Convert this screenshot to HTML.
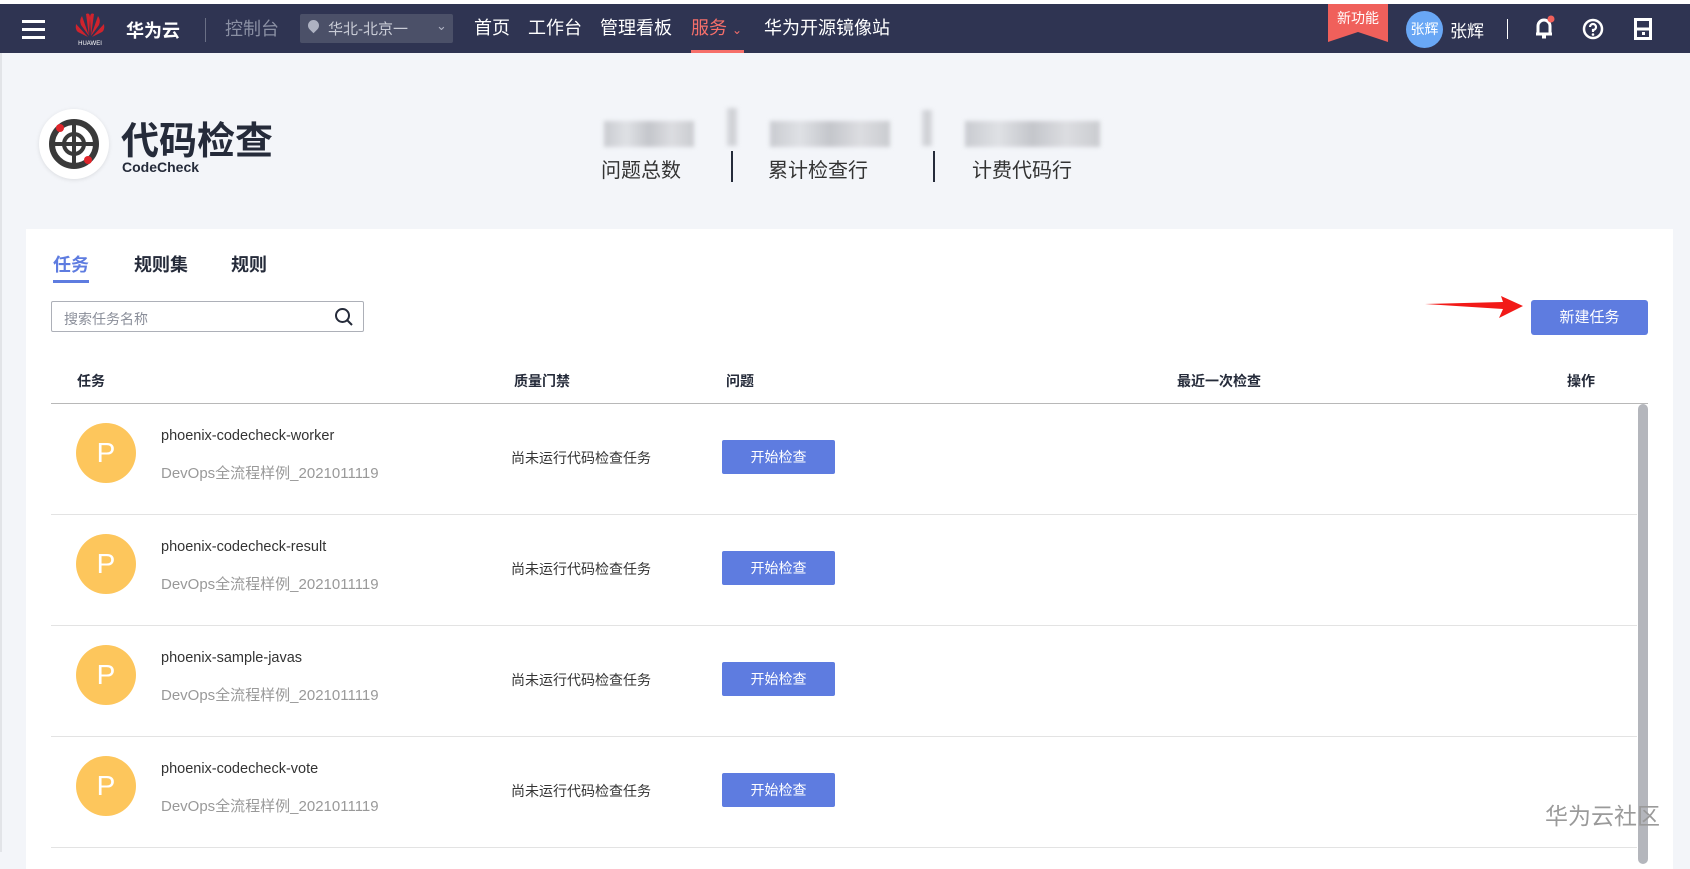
<!DOCTYPE html>
<html><head><meta charset="utf-8"><style>
*{margin:0;padding:0;box-sizing:border-box}
body{width:1690px;height:852px;overflow:hidden;background:#f3f5f9;font-family:"Liberation Sans","Noto Sans CJK SC",sans-serif;position:relative;color:#252b3a}
.a{position:absolute;white-space:nowrap}
.nav{left:0;top:4px;width:1690px;height:49px;background:#2f3452}
.nt{color:#fff;font-size:18px;top:14px}
.card{left:26px;top:229px;width:1647px;height:640px;background:#fff}
.th{font-size:14px;font-weight:bold;top:371px}
.row{position:absolute;left:51px;width:1586px;height:111px;border-bottom:1px solid #e3e3e3}
.av{position:absolute;left:25px;top:19px;width:60px;height:60px;border-radius:50%;background:#fdc65c;color:#fff;font-size:28px;text-align:center;line-height:60px}
.n1{position:absolute;left:110px;top:24px;font-size:14.5px;color:#333}
.n2{position:absolute;left:110px;top:58px;font-size:15px;color:#999}
.st{position:absolute;left:460px;top:44px;font-size:14px;color:#333}
.btn{position:absolute;left:671px;top:36px;width:113px;height:34px;background:#5e7ce0;border-radius:2px;color:#fff;font-size:14px;text-align:center;line-height:34px}
.blur{background:linear-gradient(90deg,#c9cbd0,#dfe1e5,#c4c6cb,#dcdde1,#caccd0);filter:blur(2px)}
</style></head><body>
<div class="a" style="left:0;top:0;width:1690px;height:4px;background:#fff"></div>
<div class="a nav"></div>
<div class="a" style="left:22px;top:20px;width:23px;height:3px;background:#fff;box-shadow:0 8px 0 #fff,0 16px 0 #fff"></div>
<svg class="a" style="left:72px;top:10px" width="36" height="36" viewBox="0 0 36 36"><g fill="#d0232d"><path d="M17 26 L10 6 Q7 10 9 15Z"/><path d="M19 26 L26 6 Q29 10 27 15Z"/><path d="M16 27 L4 14 Q3 20 6 22Z"/><path d="M20 27 L32 14 Q33 20 30 22Z"/><path d="M17 26 L14 4 Q18 2 18 8Z"/><path d="M19 26 L22 4 Q18 2 18 8Z"/></g><text x="18" y="35" font-size="6" fill="#fff" text-anchor="middle" font-family="Liberation Sans">HUAWEI</text></svg>
<div class="a" style="left:126px;top:17px;font-size:18px;font-weight:bold;color:#fff">华为云</div>
<div class="a" style="left:205px;top:18px;width:1px;height:24px;background:#6a6f85"></div>
<div class="a" style="left:225px;top:15px;font-size:18px;color:#8a8fa3">控制台</div>
<div class="a" style="left:300px;top:14px;width:153px;height:29px;background:#4b5068;border-radius:2px"></div>
<div class="a" style="left:308px;top:20px;width:11px;height:11px;border-radius:50% 50% 50% 0;transform:rotate(-45deg);background:#aeb2c2"></div>
<div class="a" style="left:328px;top:18px;font-size:15px;color:#c9ccd6">华北-北京一</div>
<div class="a" style="left:436px;top:18px;font-size:13px;color:#aeb2c2">⌄</div>
<div class="a nt" style="left:474px">首页</div>
<div class="a nt" style="left:528px">工作台</div>
<div class="a nt" style="left:600px">管理看板</div>
<div class="a nt" style="left:691px;color:#f66f6a">服务 <span style="font-size:12px">⌄</span></div>
<div class="a" style="left:691px;top:50px;width:53px;height:3px;background:#f66f6a"></div>
<div class="a nt" style="left:764px">华为开源镜像站</div>
<svg class="a" style="left:1328px;top:4px" width="60" height="38"><path d="M0 0H60V38L30 28L0 38Z" fill="#f0605b"/><text x="30" y="19" font-size="14" fill="#fff" text-anchor="middle" font-family="Noto Sans CJK SC">新功能</text></svg>
<div class="a" style="left:1406px;top:11px;width:37px;height:37px;border-radius:50%;background:#69a7f5;color:#fff;font-size:14px;line-height:37px;text-align:center">张辉</div>
<div class="a" style="left:1450px;top:17px;font-size:17px;color:#fff">张辉</div>
<div class="a" style="left:1507px;top:19px;width:1px;height:20px;background:#fff"></div>
<svg class="a" style="left:1533px;top:15px" width="24" height="26" viewBox="0 0 24 26"><path d="M5 19V11a6 6 0 0 1 12 0v8M3 19H19M9 22H13" stroke="#fff" stroke-width="3" fill="none"/><circle cx="18" cy="4" r="3.5" fill="#f0605b"/></svg>
<svg class="a" style="left:1582px;top:18px" width="22" height="22"><circle cx="11" cy="11" r="9" stroke="#fff" stroke-width="2.5" fill="none"/><path d="M8 9a3 3 0 1 1 3 3v2" stroke="#fff" stroke-width="2.2" fill="none"/><circle cx="11" cy="16.5" r="1.3" fill="#fff"/></svg>
<svg class="a" style="left:1634px;top:18px" width="18" height="22"><rect x="1.5" y="1.5" width="15" height="19" stroke="#fff" stroke-width="3" fill="none"/><path d="M2 11H16" stroke="#fff" stroke-width="3"/><rect x="8" y="14" width="3" height="3" fill="#fff"/></svg>

<div class="a" style="left:0;top:53px;width:2px;height:799px;background:#e2e4e8"></div>
<div class="a" style="left:39px;top:109px;width:70px;height:70px;border-radius:50%;background:#fff;box-shadow:0 1px 4px rgba(0,0,0,.1)"></div>
<svg class="a" style="left:46px;top:116px" width="56" height="56" viewBox="0 0 56 56"><circle cx="28" cy="28" r="22" stroke="#3a3a3a" stroke-width="6" fill="none"/><circle cx="28" cy="28" r="10" stroke="#3a3a3a" stroke-width="4" fill="none"/><path d="M28 8V48M8 28H48" stroke="#3a3a3a" stroke-width="4"/><circle cx="14" cy="12" r="4" fill="#e0252b"/><circle cx="42" cy="44" r="4" fill="#e0252b"/></svg>
<div class="a" style="left:121px;top:110px;font-size:38px;font-weight:bold;color:#252b3a">代码检查</div>
<div class="a" style="left:122px;top:159px;font-size:14px;font-weight:bold">CodeCheck</div>
<div class="a blur" style="left:604px;top:121px;width:90px;height:26px"></div>
<div class="a blur" style="left:727px;top:108px;width:10px;height:38px"></div>
<div class="a blur" style="left:770px;top:121px;width:120px;height:26px"></div>
<div class="a blur" style="left:922px;top:110px;width:10px;height:36px"></div>
<div class="a blur" style="left:965px;top:121px;width:135px;height:26px"></div>
<div class="a" style="left:601px;top:154px;font-size:20px;color:#333">问题总数</div>
<div class="a" style="left:731px;top:151px;width:2px;height:31px;background:#252b3a"></div>
<div class="a" style="left:768px;top:154px;font-size:20px;color:#333">累计检查行</div>
<div class="a" style="left:933px;top:151px;width:2px;height:31px;background:#252b3a"></div>
<div class="a" style="left:972px;top:154px;font-size:20px;color:#333">计费代码行</div>

<div class="a card"></div>
<div class="a" style="left:53px;top:251px;font-size:18px;font-weight:bold;color:#5e7ce0">任务</div>
<div class="a" style="left:53px;top:280px;width:36px;height:3px;background:#5e7ce0"></div>
<div class="a" style="left:134px;top:251px;font-size:18px;font-weight:bold">规则集</div>
<div class="a" style="left:231px;top:251px;font-size:18px;font-weight:bold">规则</div>
<div class="a" style="left:51px;top:301px;width:313px;height:31px;border:1px solid #adb0b8;border-radius:2px"></div>
<div class="a" style="left:64px;top:309px;font-size:14px;color:#8a8e99">搜索任务名称</div>
<svg class="a" style="left:334px;top:307px" width="20" height="20"><circle cx="8.5" cy="8.5" r="6.5" stroke="#252b3a" stroke-width="2" fill="none"/><path d="M13 13L18 18" stroke="#252b3a" stroke-width="2"/></svg>
<svg class="a" style="left:1425px;top:296px" width="100" height="24"><path d="M0 8 L78 6 L76 0 L98 10 L74 22 L78 13Z" fill="#f21a18"/></svg>
<div class="a" style="left:1531px;top:300px;width:117px;height:35px;background:#5e7ce0;border-radius:3px;color:#fff;font-size:15px;text-align:center;line-height:35px">新建任务</div>
<div class="a th" style="left:77px">任务</div>
<div class="a th" style="left:514px">质量门禁</div>
<div class="a th" style="left:726px">问题</div>
<div class="a th" style="left:1177px">最近一次检查</div>
<div class="a th" style="left:1567px">操作</div>
<div class="a" style="left:51px;top:403px;width:1597px;height:1px;background:#b8b8b8"></div>
<div class="row" style="top:404px"><div class="av">P</div><div class="n1">phoenix-codecheck-worker</div><div class="n2">DevOps全流程样例_2021011119</div><div class="st">尚未运行代码检查任务</div><div class="btn">开始检查</div></div>
<div class="row" style="top:515px"><div class="av">P</div><div class="n1">phoenix-codecheck-result</div><div class="n2">DevOps全流程样例_2021011119</div><div class="st">尚未运行代码检查任务</div><div class="btn">开始检查</div></div>
<div class="row" style="top:626px"><div class="av">P</div><div class="n1">phoenix-sample-javas</div><div class="n2">DevOps全流程样例_2021011119</div><div class="st">尚未运行代码检查任务</div><div class="btn">开始检查</div></div>
<div class="row" style="top:737px"><div class="av">P</div><div class="n1">phoenix-codecheck-vote</div><div class="n2">DevOps全流程样例_2021011119</div><div class="st">尚未运行代码检查任务</div><div class="btn">开始检查</div></div>
<div class="a" style="left:1638px;top:404px;width:10px;height:460px;background:#b4b6bc;border-radius:5px"></div>
<div class="a" style="left:1545px;top:797px;font-size:23px;color:#9a9a9a">华为云社区</div>
</body></html>
